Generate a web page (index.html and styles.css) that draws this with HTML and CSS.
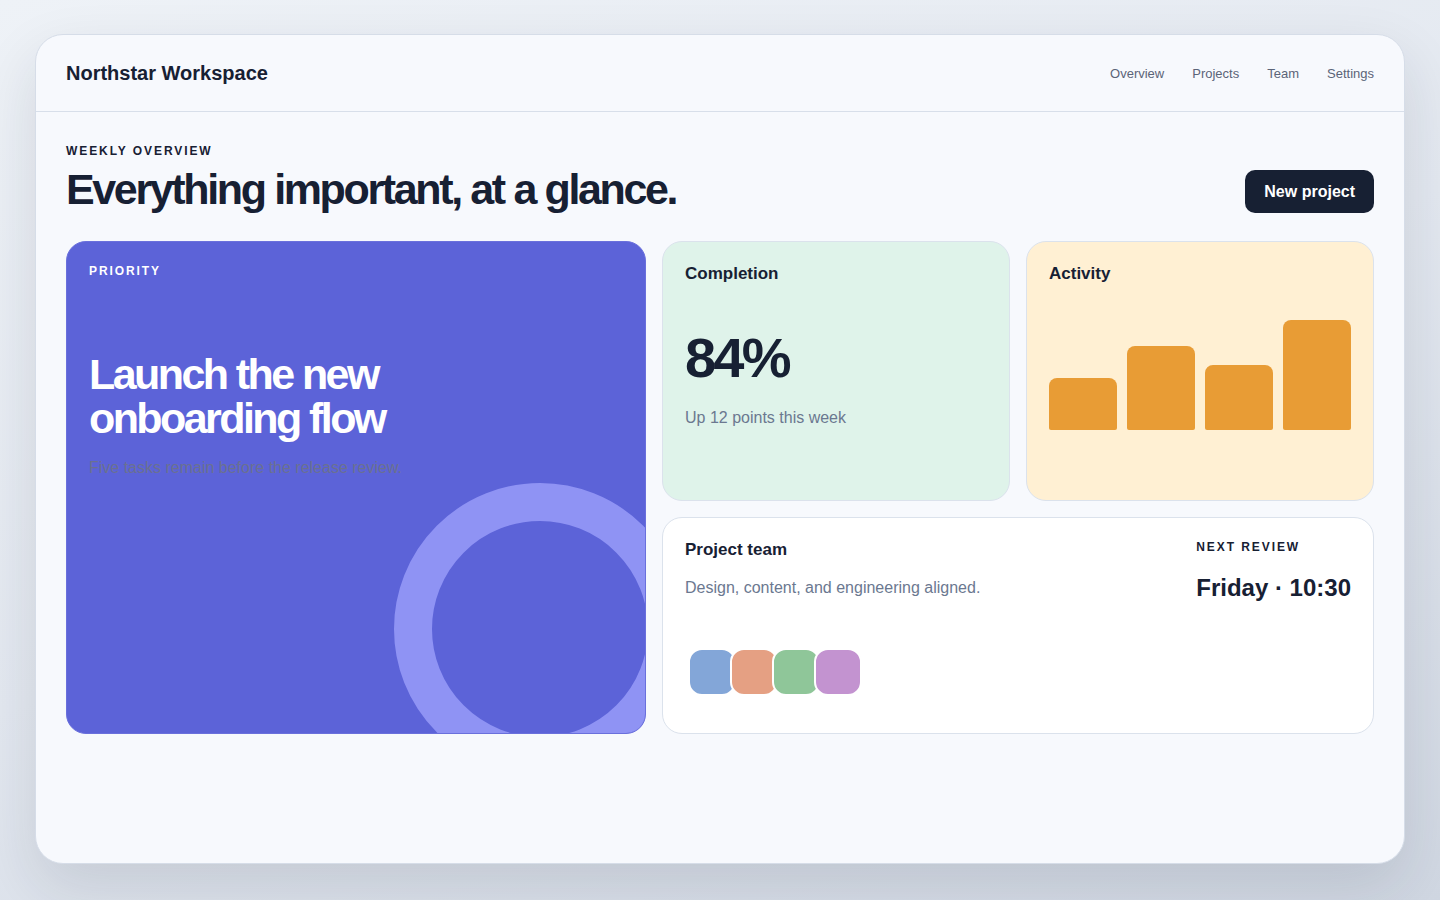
FILE: index.html
```html
<!DOCTYPE html>
<html lang="en">
<head>
<meta charset="utf-8">
<title>Northstar Workspace</title>
<link rel="stylesheet" href="styles.css">
</head>
<body>
<div class="frame">
  <header class="topbar">
    <div class="brand">Northstar Workspace</div>
    <nav class="nav">
      <a href="#">Overview</a>
      <a href="#">Projects</a>
      <a href="#">Team</a>
      <a href="#">Settings</a>
    </nav>
  </header>
  <main class="main">
    <div class="intro">
      <div class="intro-text">
        <div class="eyebrow">WEEKLY OVERVIEW</div>
        <h1 class="title">Everything important, at a glance.</h1>
      </div>
      <button class="btn">New project</button>
    </div>
    <section class="grid">
      <article class="card priority">
        <div class="eyebrow light">PRIORITY</div>
        <h2 class="priority-title">Launch the new<br>onboarding flow</h2>
        <p class="priority-sub">Five tasks remain before the release review.</p>
        <div class="ring"></div>
      </article>
      <article class="card completion">
        <div class="card-title">Completion</div>
        <div class="big">84%</div>
        <p class="muted stat-sub">Up 12 points this week</p>
      </article>
      <article class="card activity">
        <div class="card-title">Activity</div>
        <div class="chart">
          <div class="bar" style="height:40%"></div>
          <div class="bar" style="height:65%"></div>
          <div class="bar" style="height:50%"></div>
          <div class="bar" style="height:85%"></div>
        </div>
      </article>
      <article class="card team">
        <div class="team-main">
          <div class="card-title">Project team</div>
          <p class="muted team-sub">Design, content, and engineering aligned.</p>
          <div class="avatars">
            <span class="avatar a1"></span>
            <span class="avatar a2"></span>
            <span class="avatar a3"></span>
            <span class="avatar a4"></span>
          </div>
        </div>
        <div class="review">
          <div class="eyebrow">NEXT REVIEW</div>
          <div class="review-time">Friday · 10:30</div>
        </div>
      </article>
    </section>
  </main>
</div>
</body>
</html>
```

FILE: styles.css
```css
* { box-sizing: border-box; }

html, body { height: 100%; }

body {
  margin: 0;
  padding: 34px 35px 36px;
  height: 900px;
  font-family: "Liberation Sans", Arial, sans-serif;
  color: #172033;
  background: linear-gradient(160deg, #eef2f7 0%, #e3e8f0 50%, #d0d7e2 100%);
}

.frame {
  height: 100%;
  background: #f7f9fd;
  border: 1px solid #d6dde8;
  border-radius: 28px;
  box-shadow: 0 24px 60px rgba(23, 32, 51, 0.12);
  overflow: hidden;
}

.topbar {
  height: 77px;
  padding: 0 30px;
  border-bottom: 1px solid #d8dfea;
  display: flex;
  align-items: center;
  justify-content: space-between;
}

.brand {
  font-size: 20px;
  font-weight: 700;
  color: #172033;
}

.nav {
  display: flex;
  gap: 28px;
}

.nav a {
  font-size: 13px;
  color: #5b6478;
  text-decoration: none;
}

.main {
  padding: 32px 30px 30px;
}

.intro {
  display: flex;
  justify-content: space-between;
  align-items: flex-end;
  margin-bottom: 28px;
}

.eyebrow {
  font-size: 12px;
  font-weight: 700;
  letter-spacing: 0.16em;
  color: #172033;
}

.eyebrow.light { color: #ffffff; }

.title {
  margin: 8px 0 0;
  font-size: 43px;
  line-height: 47px;
  font-weight: 700;
  letter-spacing: -0.055em;
  color: #172033;
}

.btn {
  height: 43px;
  padding: 0 19px;
  border: 0;
  border-radius: 10px;
  background: #172033;
  color: #ffffff;
  font-family: inherit;
  font-size: 16px;
  font-weight: 700;
}

.grid {
  display: grid;
  grid-template-columns: 5fr 3fr 3fr;
  grid-template-rows: 260px 217px;
  gap: 16px;
}

.card {
  border: 1px solid #dbe2ec;
  border-radius: 20px;
  padding: 22px;
}

.card-title {
  font-size: 17px;
  line-height: 1.2;
  font-weight: 700;
  color: #172033;
}

.muted {
  margin: 0;
  font-size: 16px;
  line-height: 1.5;
  color: #6b7890;
}

.priority {
  grid-row: 1 / span 2;
  position: relative;
  overflow: hidden;
  background: #5c63d8;
  border-color: #6a70dc;
}

.priority-title {
  margin: 74px 0 0;
  font-size: 43px;
  line-height: 44px;
  font-weight: 700;
  letter-spacing: -0.06em;
  color: #ffffff;
}

.priority-sub {
  margin: 16px 0 0;
  font-size: 16px;
  line-height: 1.5;
  color: #6b7190;
}

.ring {
  position: absolute;
  right: -41px;
  bottom: -42px;
  width: 292px;
  height: 292px;
  border: 38px solid #8f93f4;
  border-radius: 50%;
}

.completion {
  background: #dff3ea;
}

.big {
  margin-top: 46px;
  font-size: 56px;
  line-height: 1;
  font-weight: 700;
  letter-spacing: -0.05em;
  color: #172033;
}

.stat-sub { margin-top: 20px; }

.activity {
  background: #fff0d3;
}

.chart {
  margin-top: 16px;
  height: 130px;
  display: flex;
  align-items: flex-end;
  gap: 10px;
}

.bar {
  flex: 1;
  background: #e89c35;
  border-radius: 8px 8px 2px 2px;
}

.team {
  grid-column: 2 / span 2;
  background: #ffffff;
  display: flex;
  justify-content: space-between;
}

.team-sub { margin-top: 16px; }

.avatars {
  display: flex;
  margin-top: 48px;
  padding-left: 3px;
}

.avatar {
  width: 48px;
  height: 48px;
  border: 2px solid #ffffff;
  border-radius: 14px;
  margin-left: -6px;
}

.avatar:first-child { margin-left: 0; }

.a1 { background: #83a6d8; }
.a2 { background: #e5a083; }
.a3 { background: #8fc699; }
.a4 { background: #c393d0; }

.review-time {
  margin-top: 20px;
  font-size: 24px;
  line-height: 1.2;
  font-weight: 700;
  color: #172033;
}
```
